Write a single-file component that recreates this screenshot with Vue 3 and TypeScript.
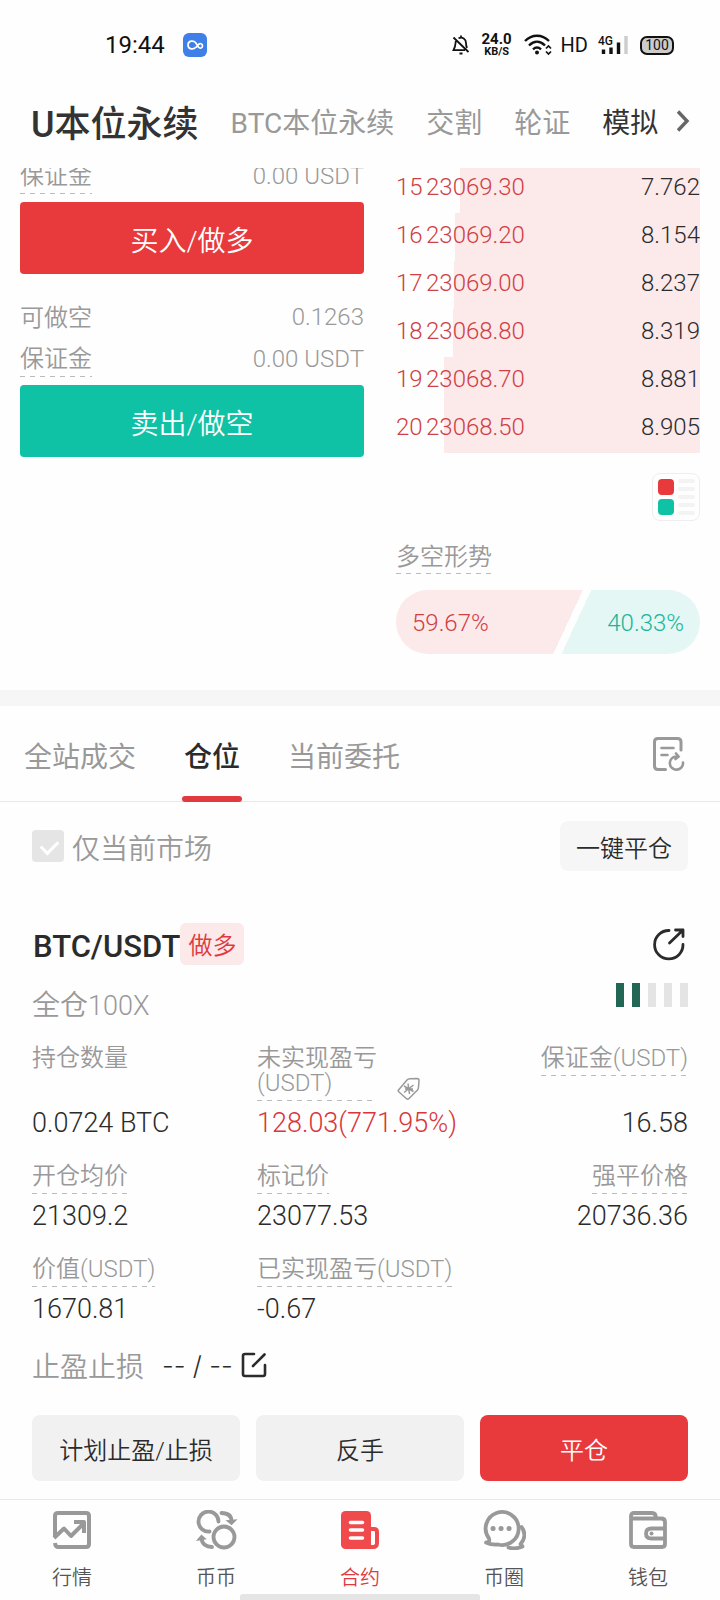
<script setup lang="ts">
import { ref } from 'vue'

interface BookRow { level: number; price: string; amount: string; depth: number }
interface Metric { label: string; value: string; hint?: boolean; gain?: boolean; tag?: boolean }

const markets = ['U本位永续', 'BTC本位永续', '交割', '轮证', '模拟']

const asks: BookRow[] = [
  { level: 15, price: '23069.30', amount: '7.762', depth: 79 },
  { level: 16, price: '23069.20', amount: '8.154', depth: 80.6 },
  { level: 17, price: '23069.00', amount: '8.237', depth: 81 },
  { level: 18, price: '23068.80', amount: '8.319', depth: 81.3 },
  { level: 19, price: '23068.70', amount: '8.881', depth: 84.2 },
  { level: 20, price: '23068.50', amount: '8.905', depth: 84.2 },
]

const tabs = ['全站成交', '仓位', '当前委托']
const activeTab = ref('仓位')
const onlyCurrent = ref(true)

const metrics: Metric[] = [
  { label: '持仓数量', value: '0.0724 BTC' },
  { label: '未实现盈亏(USDT)', value: '128.03(771.95%)', hint: true, gain: true, tag: true },
  { label: '保证金(USDT)', value: '16.58', hint: true },
  { label: '开仓均价', value: '21309.2', hint: true },
  { label: '标记价', value: '23077.53', hint: true },
  { label: '强平价格', value: '20736.36', hint: true },
  { label: '价值(USDT)', value: '1670.81', hint: true },
  { label: '已实现盈亏(USDT)', value: '-0.67', hint: true },
]
</script>

<template>
  <div class="page">
    <div class="status">
      <span class="clock">19:44</span>
      <svg class="app-badge" width="24" height="24" viewBox="0 0 24 24">
        <rect width="24" height="24" rx="6" fill="#3f7fe8" />
        <path d="M12.5 14.5C11 16.500 5 17 5 12S11 7.500 12.500 9.500L15.500 14C17 16 19.500 15 19.500 12.800S17 9.800 15.500 11.500L13.500 14" fill="none" stroke="#fff" stroke-width="1.7" stroke-linecap="round" />
      </svg>
      <span class="spacer"></span>
      <svg class="bell" width="18" height="20" viewBox="0 0 18 20" fill="none" stroke="#111" stroke-width="1.8">
        <path d="M1.500 2.500L16.500 17M3.800 6C3.500 9 3.600 11.500 1.500 15.200H13M6.500 3.300C10.500 1.500 14 4 14 8C14 10 14.300 11.500 15 13M9 0.500V2.500M7.500 18.500H10.500" />
      </svg>
      <span class="rate"><b>24.0</b><small>KB/S</small></span>
      <svg class="wifi" width="28" height="22" viewBox="0 0 28 22" fill="none" stroke="#111">
        <path d="M1 7C8 0 18 0 25 7M5 11.500C10 6.500 16 6.500 21 11.500" stroke-width="2.400" />
        <path d="M9 15.300C11.500 13 14.500 13 17 15.300" stroke-width="2.400" />
        <circle cx="13" cy="18.500" r="2" fill="#111" stroke="none" />
        <path d="M22 14.500L24.500 12L27 14.500M22 17.500L24.500 20L27 17.500" stroke-width="1.700" />
      </svg>
      <span class="hd">HD</span>
      <span class="cell">
        <span class="gen">4G</span>
        <svg width="30" height="20" viewBox="0 0 30 20">
          <path d="M5.500 19V14.500M13 19V12.500M20.500 19V7.500" stroke="#111" stroke-width="3.400" />
          <path d="M28 19V1" stroke="#ccc" stroke-width="3.400" />
        </svg>
      </span>
      <span class="battery">100</span>
    </div>

    <nav class="markets">
      <a v-for="(m, i) in markets" :key="m" href="#" :class="{ current: i === 0, dark: i === 4 }">{{ m }}</a>
      <button class="more" aria-label="更多">
        <svg width="14" height="22" viewBox="0 0 14 22"><path d="M2 1.500L11 11L2 20.500" fill="none" stroke="#666" stroke-width="3.400" /></svg>
      </button>
    </nav>

    <section class="trade">
      <div class="order">
        <div class="line"><span class="hint">保证金</span><span>0.00 USDT</span></div>
        <button class="buy">买入/做多</button>
        <div class="line first"><span class="plain">可做空</span><span>0.1263</span></div>
        <div class="line"><span class="hint">保证金</span><span>0.00 USDT</span></div>
        <button class="sell">卖出/做空</button>
      </div>

      <div class="book">
        <div v-for="r in asks" :key="r.level" class="ask">
          <span class="depth" :style="{ width: r.depth + '%' }"></span>
          <span class="level">{{ r.level }}</span>
          <span class="price">{{ r.price }}</span>
          <span class="amount">{{ r.amount }}</span>
        </div>
        <button class="layout" aria-label="盘口样式">
          <svg width="46" height="46" viewBox="0 0 46 46">
            <rect x="5" y="5" width="16" height="16" rx="4" fill="#e8393c" />
            <rect x="5" y="25" width="16" height="16" rx="4" fill="#10c2a5" />
            <path d="M27 7H40M27 15H40M27 23H40M27 31H40M27 39H40" stroke="#f3f3f3" stroke-width="4" stroke-linecap="round" />
          </svg>
        </button>
        <span class="hint trend">多空形势</span>
        <div class="ratio">
          <span class="long">59.67%</span>
          <span class="short">40.33%</span>
        </div>
      </div>
    </section>

    <div class="band"></div>

    <div class="tabs" role="tablist">
      <button v-for="t in tabs" :key="t" role="tab" :aria-selected="t === activeTab" :class="{ on: t === activeTab }" @click="activeTab = t">{{ t }}</button>
      <button class="history" aria-label="历史记录">
        <svg width="34" height="36" viewBox="0 0 34 36" fill="none" stroke="#999" stroke-width="3" stroke-linecap="round">
          <path d="M29 14V6Q29 2.500 25.500 2.500H6Q2.500 2.500 2.500 6V30Q2.500 33.500 6 33.500H13.500" />
          <path d="M9.500 12H21.500M9.500 19H15.500" stroke-width="2.600" />
          <path d="M31 26.500A6.600 6.600 0 1 1 24 20.500M24 17.500L26.500 20.500L23.500 23" stroke-width="2.600" />
        </svg>
      </button>
    </div>

    <main class="positions">
      <div class="filter">
        <label><input v-model="onlyCurrent" type="checkbox" /><span>仅当前市场</span></label>
        <button class="close-all">一键平仓</button>
      </div>

      <article>
        <header class="head">
          <h2>BTC/USDT</h2>
          <span class="side">做多</span>
          <button class="share" aria-label="分享">
            <svg width="34" height="34" viewBox="0 0 34 34" fill="none" stroke="#2b2b2b" stroke-width="2.800" stroke-linecap="round" stroke-linejoin="round">
              <path d="M17 3.500A14.200 14.200 0 1 0 31 17.500M17.500 16L31 3M23.500 3H31V9.500" />
            </svg>
          </button>
        </header>
        <div class="mode">
          <span>全仓<span class="times">100X</span></span>
          <div class="risk"><i v-for="n in 5" :key="n" :class="{ lit: n <= 2 }"></i></div>
        </div>

        <dl class="metrics">
          <div v-for="m in metrics" :key="m.label">
            <dt>
              <span :class="{ hint: m.hint, wrap: m.tag }">{{ m.label }}</span>
              <svg v-if="m.tag" width="24" height="24" viewBox="0 0 24 24" fill="none" stroke="#999" stroke-width="1.500" stroke-linejoin="round">
                <path d="M1.500 13L10 3Q11 1.800 13 1.700L20 1.500Q22 1.500 22 3.500L21.500 10Q21.400 12 20.500 13L12 21.500Q10.500 23 9 21.300L2 15Q.8 14 1.500 13Z" />
                <path d="M11 6.500L12.500 17M7 9L16.500 14.500M16.500 8L7 15.500M8 12H16" stroke-width="1.500" />
              </svg>
            </dt>
            <dd :class="{ gain: m.gain }">{{ m.value }}</dd>
          </div>
        </dl>

        <div class="stops">
          <span>止盈止损</span><span class="value">-- / --</span>
          <button aria-label="编辑">
            <svg width="26" height="26" viewBox="0 0 26 26" fill="none" stroke="#2b2b2b" stroke-width="2.600" stroke-linecap="round">
              <path d="M13 2H4Q2 2 2 4V22Q2 24 4 24H22Q24 24 24 22V13M12 14L23.500 2.500" />
            </svg>
          </button>
        </div>

        <div class="actions">
          <button>计划止盈/止损</button>
          <button>反手</button>
          <button class="danger">平仓</button>
        </div>
      </article>
    </main>

    <nav class="bottom">
      <a href="#">
        <svg width="44" height="40" viewBox="0 0 44 40" fill="none" stroke="#999" stroke-width="4" stroke-linejoin="round">
          <path d="M5 26V6Q5 3 8 3H36Q39 3 39 6V34Q39 37 36 37H8Q5.500 37 5 33" />
          <path d="M4 28L14 18.500L21 26L34 13M24 12H34V23" />
        </svg>
        行情
      </a>
      <a href="#">
        <svg width="44" height="40" viewBox="0 0 44 40" fill="none" stroke="#999" stroke-width="3.800" stroke-linecap="round">
          <circle cx="30" cy="27" r="10.500" />
          <path d="M15.500 21.500A10 10 0 1 1 24.500 11.500M27.500 3C34 3 37.500 6 37.500 11.500M18 37C12 37 8 34 7.500 28.500" />
          <path d="M34 11L37.500 14L41 10.500ZM4.500 29.500L7.500 26L10.500 28.500Z" fill="#999" stroke-width="2" />
        </svg>
        币币
      </a>
      <a href="#" class="active">
        <svg width="44" height="40" viewBox="0 0 44 40">
          <rect x="3" y="1" width="30" height="38" rx="4.500" fill="#f04a4c" />
          <path d="M31 19H36Q39 19 39 22V33Q39 37 35 37H28" fill="none" stroke="#f04a4c" stroke-width="4" />
          <path d="M12.500 12.500H24.500M12.500 20H24.500M12.500 28H24.500M35 23V33" stroke="#fff" stroke-width="3.600" stroke-linecap="round" />
        </svg>
        合约
      </a>
      <a href="#">
        <svg width="44" height="40" viewBox="0 0 44 40" fill="none" stroke="#999" stroke-width="3.800" stroke-linecap="round" stroke-linejoin="round">
          <path d="M4 32.500C7 32.500 7.800 31 7 28.500A16.500 16.500 0 1 1 16 34.500Q9 35 4 32.500Z" />
          <path d="M39.500 17C43.500 22 43.500 29 38.500 34L40.500 36.500C36 38.500 31 39 26.500 37.500" />
          <path d="M11 18.500H11.100M19 18.500H19.100M27 18.500H27.100" stroke-width="5" />
        </svg>
        币圈
      </a>
      <a href="#">
        <svg width="44" height="40" viewBox="0 0 44 40" fill="none" stroke="#999" stroke-width="3.800" stroke-linejoin="round">
          <path d="M5 8.500H35Q39 8.500 39 12V34Q39 37 36 37H8Q5 37 5 34V6Q5 3 8 3H26Q30 3 30 8.500" />
          <path d="M38 18.500H25.500Q20 18.500 20 23.500T25.500 28.500H38" />
          <circle cx="25.500" cy="23.500" r="2" fill="#999" stroke="none" />
        </svg>
        钱包
      </a>
      <span class="home"></span>
    </nav>
  </div>
</template>

<style>
body { margin: 0; background: #fefefe; }
</style>

<style scoped>
* { box-sizing: border-box; }
.page {
  min-height: 100vh;
  display: flex;
  flex-direction: column;
  background: #fefefe;
  color: #2b2b2b;
  font-family: Roboto, "Noto Sans CJK SC", sans-serif;
  font-weight: 350;
  font-size: 24px;
}
button { font: inherit; color: inherit; border: 0; padding: 0; background: none; }
a { color: inherit; text-decoration: none; }
svg { display: block; flex: none; }

.status { height: 90px; padding: 0 46px 0 105px; display: flex; align-items: center; color: #111; font-weight: 400; }
.app-badge { margin-left: 18px; }
.spacer { flex: 1; }
.rate { width: 34px; margin: 0 10px; display: flex; flex-direction: column; align-items: center; }
.rate b { font-size: 15px; line-height: 13px; font-weight: 700; }
.rate small { font-size: 11px; line-height: 12px; font-weight: 700; }
.hd { margin-left: 9px; font-size: 20px; }
.cell { position: relative; margin-left: 10px; }
.gen { position: absolute; left: 0; top: -1px; font-size: 12px; line-height: 14px; font-weight: 500; }
.battery { margin-left: 12px; width: 34px; border: 2px solid #111; border-radius: 7px; background: #ccc; font-size: 14px; line-height: 15px; text-align: center; }

.markets { height: 78px; padding: 0 31px 16px; display: flex; align-items: center; gap: 32px; font-size: 28px; font-weight: 400; color: #999; white-space: nowrap; }
.markets .current { font-size: 36px; font-weight: 500; color: #333; }
.markets .dark { color: #333; }
.more { margin-left: -14px; }

.trade { overflow: hidden; padding: 0 20px 36px; display: grid; grid-template-columns: 43fr 38fr; column-gap: 32px; }
.order, .book { margin-top: -13px; }
.order { display: flex; flex-direction: column; color: #999; }
.line { height: 42px; display: flex; justify-content: space-between; align-items: center; }
.line.first { margin-top: 22px; }
.hint { display: inline-block; padding-bottom: 5px; background: repeating-linear-gradient(90deg, #bbb 0 5px, transparent 5px 10px) left bottom / 100% 1px no-repeat; }
.line .hint { line-height: 28px; margin-top: 4px; padding-bottom: 4px; }
.plain { padding-bottom: 4px; }
.buy, .sell { height: 72px; margin-top: 5px; padding-top: 2px; border-radius: 4px; color: #fff; font-size: 28px; }
.buy { background: #e8393c; }
.sell { background: #10c2a5; }

.book { padding-top: 10px; display: flex; flex-direction: column; }
.ask { position: relative; height: 48px; padding-bottom: 4px; display: flex; align-items: center; }
.depth { position: absolute; right: 0; top: 0; bottom: 0; background: #fce9ea; }
.level, .price, .amount { position: relative; }
.level { width: 30px; color: #d03f45; }
.price { color: #d03f45; }
.amount { margin-left: auto; }
.layout { align-self: flex-end; margin-top: 20px; border: 1px solid #eee; border-radius: 8px; }
.trend { align-self: flex-start; margin-top: 24px; line-height: 24px; color: #999; }
.ratio { position: relative; height: 64px; margin-top: 16px; padding: 2px 16px 0; border-radius: 32px; overflow: hidden; display: flex; align-items: center; justify-content: space-between; background: linear-gradient(115deg, #fce9ea 56%, #fefefe 56% 58.5%, #e4f7f5 58.5%); }
.long { color: #d03f45; }
.short { color: #1bb599; }

.band { height: 16px; background: #f6f6f6; }

.tabs { height: 96px; padding: 0 34px 0 24px; border-bottom: 1px solid #e8e8e8; display: flex; align-items: stretch; gap: 48px; font-size: 28px; font-weight: 400; color: #999; }
.tabs [role="tab"] { position: relative; padding-top: 2px; }
.tabs .on { color: #2b2b2b; font-weight: 500; }
.tabs .on::after { content: ""; position: absolute; left: -2px; right: -2px; bottom: -1px; height: 6px; border-radius: 3px; background: #e03a3e; }
.history { margin-left: auto; }

.positions { padding: 19px 32px 18px; }
.filter { display: flex; justify-content: space-between; align-items: center; }
.filter label { display: flex; align-items: center; gap: 8px; font-size: 28px; color: #999; }
.filter label span { padding-top: 2px; }
.filter input { appearance: none; position: relative; width: 32px; height: 32px; margin: 0; border-radius: 4px; background: #e5e5e5; }
.filter input:checked::after { content: ""; position: absolute; left: 12px; top: 7px; width: 8px; height: 14px; border: solid #fff; border-width: 0 3px 3px 0; transform: rotate(45deg); }
.close-all { width: 128px; height: 50px; border-radius: 8px; background: #f6f6f6; }

.head { margin-top: 52px; height: 42px; display: flex; align-items: center; }
h2 { margin: 0; padding: 4px 0 0 1px; font-size: 31px; font-weight: 500; }
.side { padding: 4px 8px 0; line-height: 38px; border-radius: 6px; background: #fce9ea; color: #e03a3e; }
.share { margin: 0 2px 0 auto; }
.mode { margin-top: 18px; height: 44px; display: flex; justify-content: space-between; font-size: 28px; line-height: 46px; color: #999; }
.times { font-size: 27px; }
.risk { display: flex; gap: 8px; height: 24px; }
.risk i { width: 8px; background: #e4e4e4; }
.risk .lit { background: #226755; }

.metrics { margin: 18px 0 0; display: grid; grid-template-columns: 225fr 240fr 191fr; row-gap: 23px; }
.metrics > div { display: flex; flex-direction: column; justify-content: space-between; white-space: nowrap; }
.metrics > div:nth-child(3n) { align-items: flex-end; }
dt { padding-top: 1px; display: flex; align-items: flex-end; gap: 20px; line-height: 25px; color: #999; }
.wrap { width: 120px; white-space: normal; }
dd { margin: 5px 0 0; font-size: 27px; line-height: 34px; }
.gain { color: #d9363c; }

.stops { margin-top: 22px; height: 34px; display: flex; align-items: center; font-size: 28px; color: #999; }
.value { margin: 0 8px 0 18px; color: #2b2b2b; font-family: Inter, sans-serif; font-size: 26px; }
.actions { margin-top: 33px; display: grid; grid-template-columns: repeat(3, 1fr); gap: 16px; }
.actions button { height: 66px; border-radius: 8px; background: #f1f1f1; }
.actions .danger { background: #e8393c; color: #fff; }

.bottom { position: relative; flex: 1; padding-top: 10px; border-top: 1px solid #e8e8e8; display: grid; grid-template-columns: repeat(5, 1fr); font-size: 20px; line-height: 24px; color: #555; }
.bottom a { display: flex; flex-direction: column; align-items: center; gap: 16px; }
.bottom .active { color: #e03a3e; }
.home { position: absolute; left: 33.333%; right: 33.333%; bottom: 0; height: 6px; border-radius: 3px 3px 0 0; background: #e5e5e5; }
</style>
